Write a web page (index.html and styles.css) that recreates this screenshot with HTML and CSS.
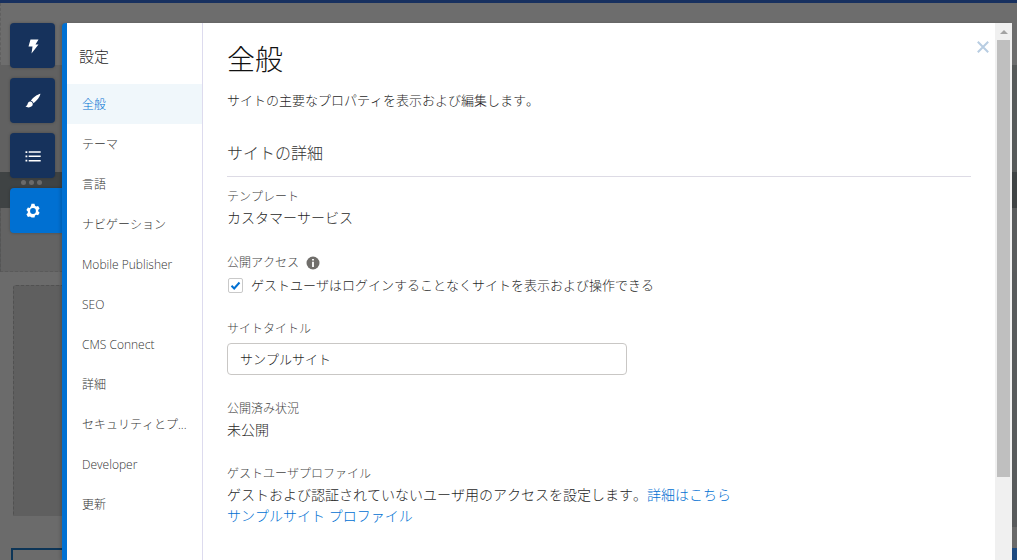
FILE: index.html
```html
<!DOCTYPE html>
<html lang="ja">
<head>
<meta charset="utf-8">
<title>設定</title>
<link rel="stylesheet" href="styles.css">
</head>
<body>
<div class="page">
  <div class="topbar"></div>
  <div class="hero"></div>
  <div class="band-a"></div>
  <div class="band-b"></div>
  <div class="band-c"></div>
  <div class="band-d"><div class="dashed-box"></div></div>
  <div class="band-e"><div class="navy-box"></div></div>
</div>

<nav class="rail">
  <button class="rail-btn">
    <svg width="16" height="16" viewBox="0 0 16 16"><path fill="#fff" d="M5.500 1.500h8l-3 5h3l-7 9 1-7h-4z"/></svg>
  </button>
  <button class="rail-btn">
    <svg width="16" height="16" viewBox="0 0 16 16"><path fill="#fff" d="M15.500.8C12.400 1.500 8 4.200 5.900 7.800c1.200.3 2.200 1.200 2.600 2.400C12 7.800 14.800 4 15.500.8zM5.200 8.500C3.300 8.700 2.800 10 2.400 11.500c-.2.900-.8 1.500-1.900 1.800 1.500 1.500 4.600 1.500 6.200 0 1-.9 1.300-2.100.9-3.100-.4-1.100-1.400-1.900-2.400-1.700z"/></svg>
  </button>
  <button class="rail-btn">
    <svg width="16" height="16" viewBox="0 0 16 16"><path fill="#fff" d="M.5 3.200h1.800v1.700H.5zM3.700 3.300h12v1.500h-12zM.5 7.500h1.800v1.700H.5zM3.700 7.600h12v1.500h-12zM.5 11.800h1.800v1.700H.5zM3.700 11.900h12v1.500h-12z"/></svg>
  </button>
  <div class="rail-dots"><span></span><span></span><span></span></div>
  <button class="rail-btn rail-btn-active">
    <svg width="16" height="16" viewBox="0 0 16 16"><path fill="#fff" fill-rule="evenodd" d="M6.500 .8h3l.5 1.900 1.200.7 1.900-.5 1.500 2.600-1.400 1.400v1.400l1.400 1.400-1.500 2.600-1.900-.5-1.200.7-.5 1.900h-3L6 14.100l-1.200-.7-1.900.5-1.500-2.600 1.400-1.400V8.400L1.400 7 2.900 4.400l1.900.5L6 2.700zM8 5.100a2.900 2.900 0 1 0 0 5.800 2.900 2.900 0 0 0 0-5.800z"/></svg>
  </button>
</nav>

<div class="modal">
  <aside class="side">
    <div class="side-title">設定</div>
    <ul class="side-list">
      <li class="side-item side-item-active">全般</li>
      <li class="side-item">テーマ</li>
      <li class="side-item">言語</li>
      <li class="side-item">ナビゲーション</li>
      <li class="side-item">Mobile Publisher</li>
      <li class="side-item">SEO</li>
      <li class="side-item">CMS Connect</li>
      <li class="side-item">詳細</li>
      <li class="side-item">セキュリティとプ...</li>
      <li class="side-item">Developer</li>
      <li class="side-item">更新</li>
    </ul>
  </aside>
  <main class="content">
    <svg class="close" width="12" height="12" viewBox="0 0 12 12"><path d="M.8.8l10.400 10.400M11.200.8L.8 11.200" stroke="#b8cde2" stroke-width="2" fill="none"/></svg>
    <h1 class="title">全般</h1>
    <p class="desc">サイトの主要なプロパティを表示および編集します。</p>
    <h2 class="section">サイトの詳細</h2>
    <div class="field field-template">
      <div class="label">テンプレート</div>
      <div class="value">カスタマーサービス</div>
    </div>
    <div class="field field-access">
      <div class="label label-info">公開アクセス
        <svg width="14" height="14" viewBox="0 0 14 14"><circle cx="7" cy="7" r="6.500" fill="#706e6b"/><path fill="#fff" d="M6.100 2.900h1.800v1.700H6.100zM6.100 5.800h1.800v5.200H6.100z"/></svg>
      </div>
      <label class="check-row">
        <span class="check-box"><svg width="11" height="11" viewBox="0 0 11 11"><path d="M1.500 5.800l2.700 2.700 5.300-6" stroke="#0070d2" stroke-width="2" fill="none"/></svg></span>
        <span class="check-text">ゲストユーザはログインすることなくサイトを表示および操作できる</span>
      </label>
    </div>
    <div class="field field-title">
      <div class="label">サイトタイトル</div>
      <div class="input">サンプルサイト</div>
    </div>
    <div class="field field-status">
      <div class="label">公開済み状況</div>
      <div class="value">未公開</div>
    </div>
    <div class="field field-guest">
      <div class="label">ゲストユーザプロファイル</div>
      <div class="value">ゲストおよび認証されていないユーザ用のアクセスを設定します。<a class="link">詳細はこちら</a></div>
      <div class="value"><a class="link">サンプルサイト プロファイル</a></div>
    </div>
  </main>
  <div class="scrollbar">
    <div class="scroll-arrow"></div>
    <div class="scroll-thumb"></div>
  </div>
</div>
</body>
</html>
```

FILE: styles.css
```css
* { box-sizing: border-box; }
html, body { margin: 0; height: 100%; overflow: hidden; }
body {
  background: #6b6b6b;
  font-family: "Open Sans", "Noto Sans CJK JP", sans-serif;
  font-weight: 300;
  font-kerning: none;
  color: #1f1f1f;
}
.page { height: 560px; display: flex; flex-direction: column; }
.topbar { height: 3px; background: #17305f; }
.hero { height: 62px; background: #6d6d6d; border-left: 1px dashed #606060; }
.band-a { height: 107px; background: linear-gradient(to left, #565959 5px, #616161 5px); }
.band-b { height: 36px; background: #3f4344; }
.band-c { height: 64px; background: linear-gradient(to left, #595b5c 5px, #636363 5px); border-left: 1px dashed #555; border-bottom: 1px dashed #5a5a5a; }
.band-d { height: 244px; background: linear-gradient(to left, #585a5b 5px, #6b6b6b 5px); padding: 13px 0 0 13px; }
.dashed-box { height: 239px; width: 60px; background: #5f5f5f; border: 1px dashed #515151; border-radius: 3px; }
.band-e {
  flex: 1; padding-top: 32px; padding-left: 11px; display: flex; flex-direction: column;
  background:
    linear-gradient(#1d4a80, #1d4a80) right bottom / 5px 12px no-repeat,
    linear-gradient(#696969, #696969) right bottom / 5px 33px no-repeat,
    linear-gradient(to left, #585a5b 5px, #6b6b6b 5px);
}
.navy-box { flex: 1; border: 2px solid #0d3557; border-bottom: 0; width: 60px; }

.rail { position: absolute; left: 10px; top: 23px; width: 52px; display: flex; flex-direction: column; gap: 10px; }
.rail-btn {
  width: 45px; height: 45px; padding: 0; border: 0; border-radius: 4px;
  background: #16325c; display: flex; align-items: center; justify-content: center;
  box-shadow: 0 0 3px rgba(0, 0, 0, .25);
}
.rail-dots { height: 10px; display: flex; gap: 3px; padding: 0 0 1px 11px; align-items: center; margin: -10px 0; }
.rail-dots span { width: 5px; height: 5px; flex: none; border-radius: 50%; background: #6a6a6a; }
.rail-btn-active { width: 52px; border-radius: 4px 0 0 4px; background: #0070d2; padding-right: 7px; }

.modal {
  position: absolute; left: 62px; top: 23px; width: 950px; height: 537px;
  display: flex; background: #fff; border-left: 5px solid #0070d2; border-top-left-radius: 4px;
  box-shadow: -2px 0 3px rgba(0, 0, 0, .15);
}
.side { width: 136px; flex: none; border-right: 1px solid #dddbee; padding-top: 23px; }
.side-title { font-size: 15px; line-height: 20px; padding-left: 12px; margin-bottom: 18px; color: #1f1f1f; }
.side-list { list-style: none; margin: 0; padding: 0; }
.side-item {
  height: 40px; line-height: 40px; padding: 1px 0 0 15px; font-size: 12px; color: #333;
  white-space: nowrap;
}
.side-item-active { background: #f0f7fb; color: #0070d2; }

.content { position: relative; flex: 1; padding: 0 24px 0 24px; min-width: 0; }
.close { position: absolute; right: 6px; top: 18px; }
.title { font-size: 28px; font-weight: 300; line-height: 40px; margin: 16px 0 0; color: #111; }
.desc { font-size: 13px; line-height: 18px; margin: 12px 0 0; color: #1f1f1f; }
.section {
  font-size: 16px; font-weight: 300; line-height: 24px; margin: 32px 0 0; padding-bottom: 11px;
  border-bottom: 1px solid #dddbe5; color: #333;
}
.field-template { margin-top: 10px; }
.field-access { margin-top: 25px; }
.field-title { margin-top: 24px; }
.field-status { margin-top: 24px; }
.field-guest { margin-top: 24px; }
.label { font-size: 12px; line-height: 20px; color: #444; }
.label-info { display: flex; align-items: center; gap: 7px; }
.value { font-size: 14px; line-height: 21px; color: #1f1f1f; white-space: nowrap; }
.link { color: #0070d2; }
.check-row { display: flex; align-items: center; height: 20px; margin-top: 2px; padding-left: 1px; }
.check-box {
  width: 15px; height: 15px; border: 1px solid #c9c9c9; border-radius: 2px; background: #fff;
  display: flex; align-items: center; justify-content: center; flex: none; margin-right: 8px;
}
.check-text { font-size: 13px; line-height: 20px; }
.input {
  width: 400px; height: 32px; margin-top: 4px; padding: 0 12px; line-height: 30px; font-size: 13px;
  border: 1px solid #c9c7c5; border-radius: 4px; background: #fff; color: #1f1f1f;
}

.scrollbar { width: 17px; flex: none; background: #f0f0f0; position: relative; padding: 17px 2px 0; }
.scroll-arrow {
  position: absolute; left: 5px; top: 7px; width: 0; height: 0;
  border-left: 4px solid transparent; border-right: 4px solid transparent; border-bottom: 4px solid #a3a3a3;
}
.scroll-thumb { height: 437px; background: #bfbfbf; }
```
